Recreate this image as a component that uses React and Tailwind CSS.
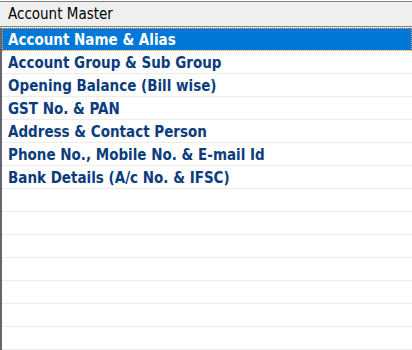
import React from "react";

const items = [
  "Account Name & Alias",
  "Account Group & Sub Group",
  "Opening Balance (Bill wise)",
  "GST No. & PAN",
  "Address & Contact Person",
  "Phone No., Mobile No. & E-mail Id",
  "Bank Details (A/c No. & IFSC)",
];

export default function App() {
  const rows = [...items, ...Array(7).fill("")];
  return (
    <div className="w-[412px] h-[350px] overflow-hidden bg-white font-['Tahoma','DejaVu_Sans_Condensed','DejaVu_Sans',sans-serif]">
      {/* header */}
      <div className="mt-px h-[26px] border-y border-[#828282] bg-[#efefef] flex items-center pl-2 pt-px text-[15px] text-black">
        Account Master
      </div>
      <div className="h-px bg-[#e3e3e3]" />
      <div className="border-l-2 border-[#66666e] h-full">
        {rows.map((label, i) => (
          <div
            key={i}
            className={
              i === 0
                ? "h-[23px] border-b border-[#ececec] bg-[#0078d7] text-white flex items-center pl-[6px] pt-[2px] font-bold text-[15px] outline-1 outline-dotted outline-[#e8a040] -outline-offset-1"
                : "h-[23px] border-b border-[#ececec] text-[#0b3c7d] flex items-center pl-[6px] pt-[2px] font-bold text-[15px]"
            }
          >
            {label}
          </div>
        ))}
      </div>
    </div>
  );
}
